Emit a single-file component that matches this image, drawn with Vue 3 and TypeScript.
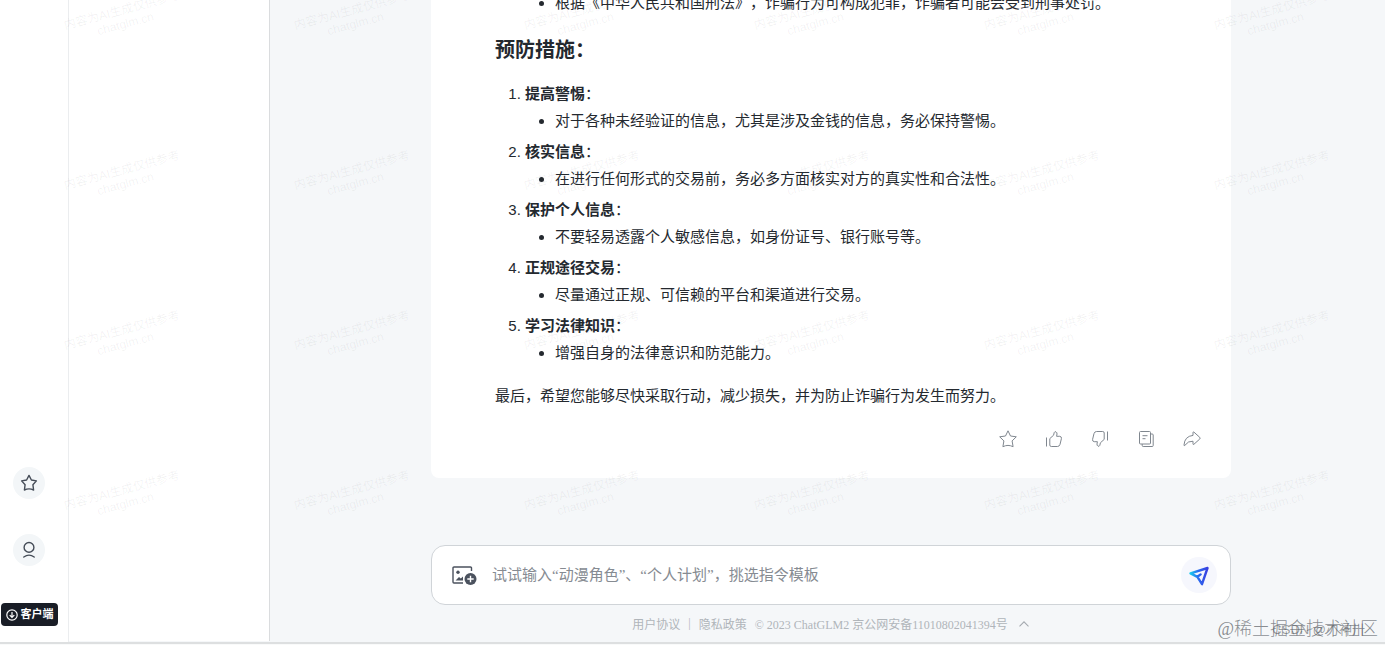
<script setup lang="ts">
interface Measure {
  title: string
  detail: string
}

const measures: Measure[] = [
  { title: '提高警惕', detail: '对于各种未经验证的信息，尤其是涉及金钱的信息，务必保持警惕。' },
  { title: '核实信息', detail: '在进行任何形式的交易前，务必多方面核实对方的真实性和合法性。' },
  { title: '保护个人信息', detail: '不要轻易透露个人敏感信息，如身份证号、银行账号等。' },
  { title: '正规途径交易', detail: '尽量通过正规、可信赖的平台和渠道进行交易。' },
  { title: '学习法律知识', detail: '增强自身的法律意识和防范能力。' },
]

interface Action {
  label: string
  paths: string[]
}

const actions: Action[] = [
  {
    label: '收藏',
    paths: ['M10 1.8 12.5 7 18.3 7.8 14.1 11.9 15.1 17.7Q12.5 16.4 10 16.4T4.9 17.7L5.9 11.9 1.7 7.8 7.5 7Z'],
  },
  {
    label: '点赞',
    paths: [
      'M2.5 8.5V17.5',
      'M5.8 9.6 9.6 6.2 10.2 3.6Q10.8 2.2 12 2.9T13 5L12.6 7.3H15.8Q17.8 7.5 17.4 9.7L16 15.4Q15.4 17.5 13.4 17.5H7.3Q5.8 17.5 5.8 16Z',
    ],
  },
  {
    label: '点踩',
    paths: [
      'M17.5 2.5V11.5',
      'M14.2 10.4 10.4 13.8 9.8 16.4Q9.2 17.8 8 17.1T7 15L7.4 12.7H4.2Q2.2 12.5 2.6 10.3L4 4.6Q4.6 2.5 6.6 2.5H12.7Q14.2 2.5 14.2 4Z',
    ],
  },
  {
    label: '复制',
    paths: [
      'M4.5 2.5H13.5Q14.5 2.5 14.5 3.5V14Q14.5 15 13.5 15H4.5Q3.5 15 3.5 14V3.5Q3.5 2.5 4.5 2.5Z',
      'M14.5 5H16.2Q17.2 5 17.2 6V16.5Q17.2 17.5 16.2 17.5H7.2Q6.2 17.5 6.2 16.5V15',
      'M6.5 6.7H11.5M6.5 9.7H9.5',
    ],
  },
  {
    label: '分享',
    paths: ['M11 3.6Q11 2.4 12 3.2L17.7 8.3Q18.6 9.2 17.7 10.1L12 15.2Q11 16 11 14.8V12.2Q6 11.8 3 16.2Q2 17.4 2 16Q2.6 7.3 11 6.4Z'],
  },
]

const watermarks: number[] = Array.from({ length: 24 }, (_, i) => i)
</script>

<template>
  <div class="page">
    <div class="shell">
      <nav class="rail" aria-label="主导航">
        <button class="round" type="button" aria-label="收藏">
          <svg viewBox="0 0 20 20" width="20" height="20"><path d="M10 2.4 12.4 7 17.4 7.9 13.9 11.7 14.6 17 Q10 14.8 5.4 17L6.1 11.7 2.6 7.9 7.6 7Z" /></svg>
        </button>
        <button class="round" type="button" aria-label="我的">
          <svg viewBox="0 0 20 20" width="20" height="20"><circle cx="10" cy="7.4" r="4.9" /><path d="M4.8 17Q10 13.2 15.2 17" /></svg>
        </button>
        <button class="client" type="button">
          <svg viewBox="0 0 12 12" width="12" height="12"><circle cx="6" cy="6" r="5.2" /><path d="M6 3V8.4M3.7 6.2 6 8.5 8.3 6.2" /></svg>
          <span>客户端</span>
        </button>
      </nav>
      <aside class="history"></aside>
      <main class="main">
        <section class="thread">
          <article class="card">
            <ul class="bullets">
              <li>根据《中华人民共和国刑法》，诈骗行为可构成犯罪，诈骗者可能会受到刑事处罚。</li>
            </ul>
            <h3>预防措施：</h3>
            <ol class="measures">
              <li v-for="m in measures" :key="m.title">
                <strong>{{ m.title }}</strong>：
                <ul class="bullets">
                  <li>{{ m.detail }}</li>
                </ul>
              </li>
            </ol>
            <p class="closing">最后，希望您能够尽快采取行动，减少损失，并为防止诈骗行为发生而努力。</p>
            <div class="actions">
              <button v-for="a in actions" :key="a.label" type="button" :aria-label="a.label">
                <svg viewBox="0 0 20 20" width="20" height="20"><path v-for="d in a.paths" :key="d" :d="d" /></svg>
              </button>
            </div>
          </article>
        </section>
        <form class="composer" @submit.prevent>
          <button class="attach" type="button" aria-label="上传图片">
            <svg viewBox="0 0 26 20" width="26" height="20">
              <path d="M19.5 6V3Q19.5 2 18.5 2H2Q1 2 1 3V17Q1 18 2 18H11" fill="none" stroke="#4b525e" stroke-width="1.4" />
              <circle cx="6" cy="7.2" r="1.7" fill="#4b525e" />
              <path d="M3.5 15.5 7 12 8.8 13.4 11 11.6V15.5Z" fill="#4b525e" />
              <circle cx="18.5" cy="14" r="6" fill="#4b525e" />
              <path d="M18.5 10.8V17.2M15.3 14H21.7" stroke="#fff" stroke-width="1.4" />
            </svg>
          </button>
          <input type="text" aria-label="输入消息" placeholder="试试输入“动漫角色”、“个人计划”，挑选指令模板" />
          <button class="send" type="submit" aria-label="发送">
            <svg viewBox="0 0 22 22" width="22" height="22">
              <defs>
                <linearGradient id="send-stroke" x1="0" y1="0" x2="1" y2="0">
                  <stop offset="0" stop-color="#18c8ee" />
                  <stop offset="0.45" stop-color="#2a6df0" />
                  <stop offset="1" stop-color="#3a3fe0" />
                </linearGradient>
              </defs>
              <path d="M2.5 9.4 19.5 4 14 20.2 9.4 12.8ZM9.4 12.8 12.6 10.4" fill="none" stroke="url(#send-stroke)" stroke-width="2.4" stroke-linejoin="round" stroke-linecap="round" />
            </svg>
          </button>
        </form>
        <footer class="legal">
          <a href="#">用户协议</a>
          <span class="bar">|</span>
          <a href="#" class="privacy">隐私政策</a>
          <span>© 2023 ChatGLM2 京公网安备11010802041394号</span>
          <button type="button" aria-label="展开">
            <svg viewBox="0 0 12 8" width="12" height="8"><path d="M1.5 6.3 6 1.8 10.5 6.3" /></svg>
          </button>
        </footer>
      </main>
    </div>
    <div class="marks" aria-hidden="true">
      <div v-for="n in watermarks" :key="n" class="mark"><span>内容为AI生成仅供参考<br />chatglm.cn</span></div>
    </div>
    <div class="credit">@稀土掘金技术社区</div>
    <div class="credit small">CSDN @刃神卅</div>
  </div>
</template>

<style>
body {
  margin: 0;
}
</style>

<style scoped>
.page {
  position: relative;
  height: 100vh;
  box-sizing: border-box;
  padding-bottom: 1px;
  overflow: hidden;
  background: #f9fafa;
  color: #24292f;
  font: 15px/27px "Liberation Sans", "Noto Sans CJK SC", sans-serif;
  text-spacing-trim: space-all;
}
.shell {
  display: flex;
  height: 100%;
  box-sizing: border-box;
  border-bottom: 2px solid #dddfe0;
  background: #f5f7f9;
}
button {
  display: flex;
  align-items: center;
  justify-content: center;
  padding: 0;
  border: 0;
  background: none;
  font: inherit;
  cursor: pointer;
}
svg {
  display: block;
  fill: none;
}
.rail {
  display: flex;
  flex-direction: column;
  align-items: center;
  justify-content: flex-end;
  flex: none;
  width: 58px;
  padding: 0 10px 16px 0;
  border-right: 1px solid #ebedef;
  background: #fff;
}
.round {
  width: 32px;
  height: 32px;
  margin-bottom: 35px;
  border-radius: 50%;
  background: #f3f6f8;
}
.round svg {
  stroke: #454c57;
  stroke-width: 1.4;
  stroke-linejoin: round;
  stroke-linecap: round;
}
.client {
  gap: 3px;
  width: 57px;
  height: 23px;
  margin-left: 1px;
  margin-top: 2px;
  border-radius: 4px;
  background: #191d26;
  color: #fff;
  font-size: 11px;
  font-weight: 700;
  line-height: 23px;
}
.client svg {
  stroke: #fff;
  stroke-width: 1.2;
}
.history {
  flex: none;
  width: 200px;
  margin-bottom: 1px;
  border-right: 1px solid #dadcde;
  background: #fff;
}
.main {
  display: flex;
  flex-direction: column;
  align-items: center;
  flex: 1;
  min-width: 0;
  padding-left: 7px;
}
.thread {
  display: flex;
  flex-direction: column;
  justify-content: flex-end;
  flex: 1;
  min-height: 0;
  width: 100%;
  max-width: 800px;
  margin-bottom: 67px;
  overflow: hidden;
}
.card {
  box-sizing: border-box;
  padding: 24px 29px 29px 64px;
  border-radius: 8px;
  background: #fff;
}
.card > .bullets {
  padding-left: 60px;
}
ul,
ol {
  margin: 0;
  padding-left: 30px;
}
ul {
  list-style: disc;
}
h3 {
  margin: 20px 0 16px;
  font-size: 20px;
  line-height: 28px;
}
.measures > li + li {
  margin-top: 4px;
}
.closing {
  margin: 16px 0 20px;
}
.actions {
  display: flex;
  justify-content: flex-end;
  gap: 26px;
}
.actions svg {
  stroke: #80878f;
  stroke-width: 1;
  stroke-linejoin: round;
}
.composer {
  display: flex;
  align-items: center;
  box-sizing: border-box;
  width: 100%;
  max-width: 800px;
  height: 60px;
  padding: 0 13px 0 20px;
  border: 1px solid #d0d4d8;
  border-radius: 14px;
  background: #fff;
}
.composer input {
  flex: 1;
  min-width: 0;
  height: 32px;
  padding: 0;
  margin-left: 14px;
  border: 0;
  outline: 0;
  background: none;
  font: 15px "Liberation Serif", "Noto Sans CJK SC", serif;
}
.composer input::placeholder {
  color: #868b92;
  opacity: 1;
}
.send {
  width: 36px;
  height: 36px;
  border-radius: 50%;
  background: #f6f7fd;
}
.legal {
  display: flex;
  align-items: center;
  height: 37px;
  color: #b0b5ba;
  font: 12px "Liberation Serif", "Noto Sans CJK SC", serif;
}
.legal a {
  color: inherit;
  text-decoration: none;
}
.bar {
  margin: 0 8px;
}
.privacy {
  margin-right: 8px;
}
.legal button {
  margin-left: 10px;
}
.legal svg {
  stroke: #a4aab0;
  stroke-width: 1.1;
}
.marks {
  position: absolute;
  inset: -63px 0 auto 9px;
  display: grid;
  grid-template-columns: repeat(6, 230px);
  grid-auto-rows: 160px;
  pointer-events: none;
}
.mark {
  display: flex;
  align-items: center;
  justify-content: center;
}
.mark span {
  color: rgba(70, 75, 85, 0.07);
  font-size: 12px;
  line-height: 14px;
  text-align: center;
  transform: rotate(-15deg);
}
.credit {
  position: absolute;
  right: 7px;
  bottom: 4px;
  color: rgba(90, 94, 100, 0.7);
  font: 300 18px/24px "Liberation Serif", "Noto Sans CJK SC", serif;
  white-space: nowrap;
  pointer-events: none;
}
.credit.small {
  right: 20px;
  color: rgba(90, 94, 100, 0.6);
  font: 13px/22px "Liberation Sans", "Noto Sans CJK SC", sans-serif;
}
</style>
